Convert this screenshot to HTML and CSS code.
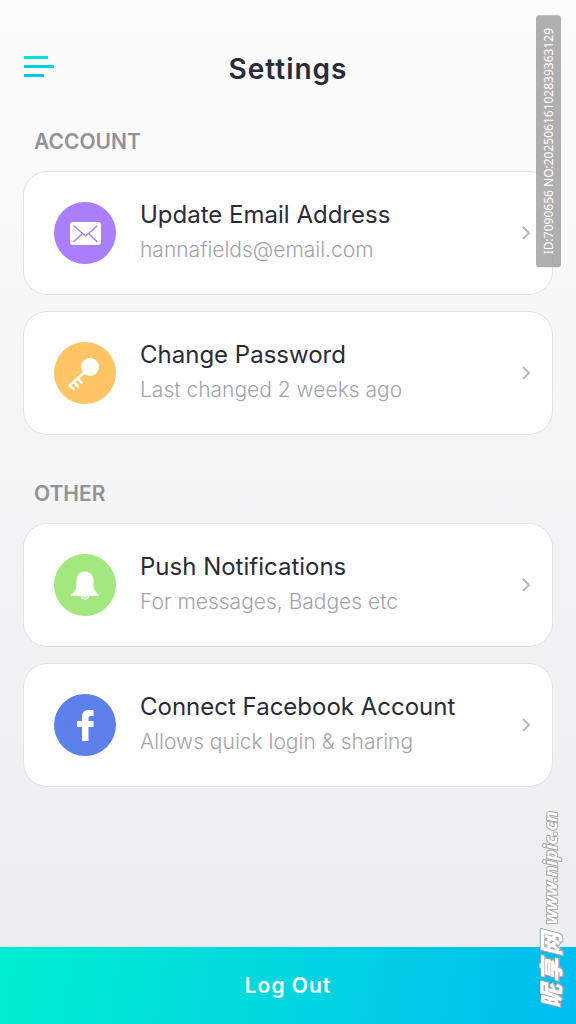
FILE: index.html
```html
<!DOCTYPE html>
<html lang="en">
<head>
  <meta charset="UTF-8" />
  <meta name="viewport" content="width=device-width, initial-scale=1" />
  <title>Settings</title>
  <link rel="stylesheet" href="styles.css">
</head>
<body>
  <header class="header">
    <button class="menu-btn" type="button" aria-label="Menu">
      <svg viewBox="0 0 30 22" width="30" height="22">
        <path fill="#00e5dc" d="M0 0h24v3H0z" />
        <path fill="#00d2e0" d="M0 9h30v3H0z" />
        <path fill="#00c4ec" d="M0 18h20v3H0z" />
      </svg>
    </button>
    <h1>Settings</h1>
  </header>

  <main class="content">
    <section class="group">
      <h2>Account</h2>

      <a class="card" href="#email">
        <span class="icon icon-email">
          <svg viewBox="0 0 62 62">
            <rect x="16" y="20" width="31" height="23" rx="3" fill="#fff" />
            <path d="M20 24l11.500 10L43 24M20 39.500l8-7.500M43 39.500l-8-7.500" fill="none" stroke="#a97fff" stroke-width="1.500" stroke-linecap="round" />
          </svg>
        </span>
        <span class="text">
          <span class="title">Update Email Address</span>
          <span class="subtitle">hannafields@email.com</span>
        </span>
        <svg class="chevron" viewBox="0 0 8 14"><path d="M1 1l6 6-6 6" /></svg>
      </a>

      <a class="card" href="#password">
        <span class="icon icon-password">
          <svg viewBox="0 0 62 62">
            <circle cx="36" cy="25" r="9" fill="#fff" />
            <path d="M31 30L15.500 43.500l4 3.500M19.500 40l4.500 4.500M23.500 36.500l4 4" fill="none" stroke="#fff" stroke-width="2.500" stroke-linecap="round" stroke-linejoin="round" />
          </svg>
        </span>
        <span class="text">
          <span class="title">Change Password</span>
          <span class="subtitle">Last changed 2 weeks ago</span>
        </span>
        <svg class="chevron" viewBox="0 0 8 14"><path d="M1 1l6 6-6 6" /></svg>
      </a>
    </section>

    <section class="group">
      <h2>Other</h2>

      <a class="card" href="#notifications">
        <span class="icon icon-push">
          <svg viewBox="0 0 62 62">
            <path d="M31 17.500c-5.500 0-8.500 4-8.500 9 0 8 0 9.500-4.500 13.500-1 1-1 2 0 2h26c1 0 1-1 0-2-4.500-4-4.500-5.500-4.500-13.500 0-5-3-9-8.500-9z" fill="#fff" />
            <path d="M27.500 41.500a3.500 3.500 0 0 0 7 0" fill="none" stroke="#fff" stroke-width="1.200" />
            <path d="M29 42a2 1.500 0 0 0 4 0z" fill="#fff" />
          </svg>
        </span>
        <span class="text">
          <span class="title">Push Notifications</span>
          <span class="subtitle">For messages, Badges etc</span>
        </span>
        <svg class="chevron" viewBox="0 0 8 14"><path d="M1 1l6 6-6 6" /></svg>
      </a>

      <a class="card" href="#facebook">
        <span class="icon icon-facebook">
          <svg viewBox="0 0 62 62">
            <path d="M39.500 16v6h-3c-1.500 0-2 .7-2 2v3h5v6h-5v14H28V33h-5v-6h5v-4c0-4.500 2.500-7 7-7z" fill="#fff" />
          </svg>
        </span>
        <span class="text">
          <span class="title">Connect Facebook Account</span>
          <span class="subtitle">Allows quick login &amp; sharing</span>
        </span>
        <svg class="chevron" viewBox="0 0 8 14"><path d="M1 1l6 6-6 6" /></svg>
      </a>
    </section>
  </main>

  <footer class="footer">
    <button class="logout" type="button">Log Out</button>
  </footer>

  <div class="stamp">ID:7090656 NO:20250616102839363129</div>
  <div class="watermark"><span class="mark" lang="zh">昵享网</span><span class="site">www.nipic.cn</span></div>
</body>
</html>
```
FILE: styles.css
```css
:root {
  --text-primary: #292b38;
  --text-muted: #929398;
  --text-light: #a3a4a9;
  --border-color: #e2e2e4;
}

* {
  margin: 0;
  padding: 0;
  box-sizing: border-box;
}

body {
  font-family: Inter, Roboto, sans-serif;
  background: linear-gradient(#fcfcfc, #ebecee);
  color: var(--text-primary);
  min-height: 100vh;
  display: flex;
  flex-direction: column;
  position: relative;
}

button {
  border: none;
  background: none;
  font-family: inherit;
  cursor: pointer;
}

.header {
  display: grid;
  grid-template-columns: 30px 1fr 30px;
  align-items: start;
  padding: 53px 24px 0;
}

.menu-btn {
  padding: 3px 0;
}

.menu-btn svg {
  display: block;
}

h1 {
  font-size: 28px;
  line-height: 32px;
  font-weight: 600;
  letter-spacing: 1px;
  text-align: center;
}

.content {
  flex: 1;
  padding: 44px 23px 32px;
  display: flex;
  flex-direction: column;
  gap: 46px;
}

.group {
  display: flex;
  flex-direction: column;
  gap: 16px;
}

h2 {
  font-size: 21px;
  line-height: 26px;
  font-weight: 600;
  text-transform: uppercase;
  color: var(--text-muted);
  padding-left: 11px;
}

.card {
  display: flex;
  align-items: center;
  padding: 30px 22px 30px 30px;
  background: #fff;
  border: 1px solid var(--border-color);
  border-radius: 24px;
  color: inherit;
  text-decoration: none;
}

.icon {
  width: 62px;
  height: 62px;
  border-radius: 50%;
  margin-right: 24px;
  flex-shrink: 0;
}

.icon svg {
  display: block;
}

.icon-email { background: #a97fff; }
.icon-password { background: #ffc464; }
.icon-push { background: #a2e87f; }
.icon-facebook { background: #5d80ea; }

.text {
  flex: 1;
  display: flex;
  flex-direction: column;
  margin: -4px 0;
}

.title {
  font-size: 24px;
  line-height: 34px;
}

.subtitle {
  font-size: 21px;
  line-height: 36px;
  font-weight: 300;
  color: var(--text-light);
}

.chevron {
  width: 8px;
  height: 14px;
  fill: none;
  stroke: #b9babd;
  stroke-width: 2;
  overflow: visible;
}

.footer {
  background: linear-gradient(100deg, #00efd0, #00bcf0);
}

.logout {
  display: block;
  width: 100%;
  padding: 26px 0 25px;
  font-size: 21px;
  line-height: 26px;
  font-weight: 600;
  letter-spacing: 1px;
  color: #fff;
}

/* vertical labels over the page */
.stamp,
.watermark {
  position: absolute;
  writing-mode: vertical-rl;
  text-orientation: sideways;
  transform: rotate(180deg);
  white-space: nowrap;
  color: #fff;
  pointer-events: none;
}

.stamp {
  top: 15px;
  right: 15px;
  padding: 13px 0;
  background: rgba(150, 150, 150, 0.75);
  border-radius: 3px;
  font-family: "Noto Sans", sans-serif;
  font-size: 12px;
  line-height: 25px;
}

.watermark {
  right: 14px;
  bottom: 16px;
  display: flex;
  align-items: center;
  gap: 6px;
  line-height: 24px;
  font-style: italic;
  font-weight: 700;
  paint-order: stroke fill;
  -webkit-text-stroke: 2px #a5a5a5;
}

.mark {
  font-family: "Noto Sans CJK SC", sans-serif;
  font-size: 24px;
  font-weight: 900;
  letter-spacing: 2px;
}

.site {
  font-family: "Open Sans", sans-serif;
  font-size: 18px;
}
```
